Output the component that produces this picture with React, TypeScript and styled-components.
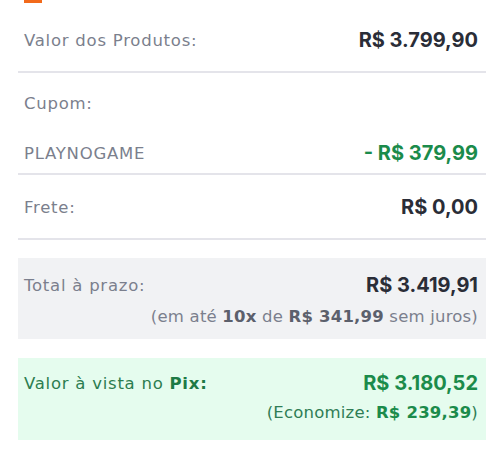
import React from "react";
import styled, { createGlobalStyle } from "styled-components";

const GlobalStyle = createGlobalStyle`
  body {
    margin: 0;
    background: #ffffff;
    font-family: "DejaVu Sans", "Open Sans", sans-serif;
  }
`;

const Wrapper = styled.div`
  width: 468px;
  margin-left: 18px;
`;

const Marker = styled.div`
  width: 18px;
  height: 3px;
  margin-left: 6px;
  background: #f26a1b;
`;

const Section = styled.div<{ $top: number; $bottom: number; $gap?: number }>`
  display: flex;
  flex-direction: column;
  gap: ${(p) => p.$gap || 0}px;
  padding: ${(p) => p.$top}px 8px ${(p) => p.$bottom}px 6px;
  border-bottom: 2px solid #e4e4ea;
`;

const Row = styled.div`
  display: flex;
  justify-content: space-between;
  align-items: center;
  height: 26px;
`;

const Label = styled.span<{ $green?: boolean }>`
  font-size: 16.5px;
  letter-spacing: 0.75px;
  color: ${(p) => (p.$green ? "#2c7d50" : "#7b7f8d")};

  b {
    font-weight: 700;
    color: #1d7a45;
  }
`;

const Value = styled.span<{ $green?: boolean }>`
  font-family: Inter, "Liberation Sans", sans-serif;
  font-size: 20px;
  font-weight: 700;
  color: ${(p) => (p.$green ? "#1b8b4b" : "#2a2d37")};
`;

const Box = styled.div<{ $green?: boolean; $gap: number }>`
  display: flex;
  flex-direction: column;
  gap: ${(p) => p.$gap}px;
  margin-top: ${(p) => (p.$green ? 19 : 18)}px;
  padding: ${(p) => (p.$green ? "12px 8px 16px 6px" : "14px 8px 11px 6px")};
  background: ${(p) => (p.$green ? "#e5fcee" : "#f1f2f4")};
`;

const Note = styled.div<{ $green?: boolean }>`
  text-align: right;
  line-height: 22px;
  font-size: 16.5px;
  letter-spacing: 0.2px;
  color: ${(p) => (p.$green ? "#2f7d55" : "#7b7f8d")};

  b {
    font-weight: 700;
    color: ${(p) => (p.$green ? "#1b8b4b" : "#5c606c")};
  }
`;

export default function App() {
  return (
    <>
      <GlobalStyle />
      <Wrapper>
        <Marker />
        <Section $top={24} $bottom={18}>
          <Row>
            <Label>Valor dos Produtos:</Label>
            <Value>R$ 3.799,90</Value>
          </Row>
        </Section>
        <Section $top={17} $bottom={7} $gap={24}>
          <Row>
            <Label>Cupom:</Label>
          </Row>
          <Row>
            <Label>PLAYNOGAME</Label>
            <Value $green>- R$ 379,99</Value>
          </Row>
        </Section>
        <Section $top={19} $bottom={18}>
          <Row>
            <Label>Frete:</Label>
            <Value>R$ 0,00</Value>
          </Row>
        </Section>
        <Box $gap={8}>
          <Row>
            <Label>Total à prazo:</Label>
            <Value>R$ 3.419,91</Value>
          </Row>
          <Note>
            (em até <b>10x</b> de <b>R$ 341,99</b> sem juros)
          </Note>
        </Box>
        <Box $green $gap={6}>
          <Row>
            <Label $green>
              Valor à vista no <b>Pix:</b>
            </Label>
            <Value $green>R$ 3.180,52</Value>
          </Row>
          <Note $green>
            (Economize: <b>R$ 239,39</b>)
          </Note>
        </Box>
      </Wrapper>
    </>
  );
}
